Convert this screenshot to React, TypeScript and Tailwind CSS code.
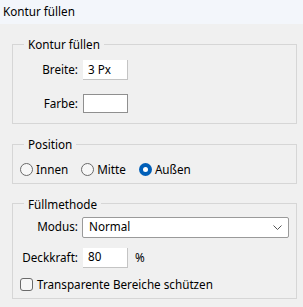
import React from "react";

function Group({ title, children }: { title: string; children: React.ReactNode }) {
  return (
    <fieldset className="ml-[12px] w-[285px] border border-[#d6d6d6] pl-[8px] pr-[7px]">
      <legend className="ml-[3px] px-[4px] leading-[16px]">{title}</legend>
      {children}
    </fieldset>
  );
}

function Radio({ label, checked }: { label: string; checked?: boolean }) {
  return (
    <label className="flex items-center gap-[3px]">
      {checked ? (
        <span className="flex h-[13px] w-[13px] items-center justify-center rounded-full bg-[#005fb8]">
          <span className="h-[5px] w-[5px] rounded-full bg-white" />
        </span>
      ) : (
        <span className="h-[13px] w-[13px] rounded-full border border-[#6a6a6a] bg-[#f7f7f7]" />
      )}
      <span>{label}</span>
    </label>
  );
}

export default function App() {
  return (
    <div
      className="h-[307px] w-[303px] bg-[#f0f0f0] text-[11.7px] text-black"
      style={{ fontFamily: '"Noto Sans", "Open Sans", sans-serif' }}
    >
      {/* Title bar */}
      <div className="flex h-[24px] items-center bg-[#f3f6fb] pl-[3px]">Kontur füllen</div>

      <div className="flex flex-col gap-[12px] pt-[12px]">
        <Group title="Kontur füllen">
          <div className="flex flex-col gap-[14px] pt-[8px] pb-[10px]">
            <div className="flex items-center gap-[5px]">
              <span className="w-[57px] text-right">Breite:</span>
              <div className="flex h-[20px] w-[45px] items-center border-r border-b border-[#c4c4c4] bg-white pl-[5px]">
                3 Px
              </div>
            </div>
            <div className="flex items-center gap-[5px]">
              <span className="w-[57px] text-right">Farbe:</span>
              <div className="h-[19px] w-[45px] border border-[#8f8f8f] bg-white" />
            </div>
          </div>
        </Group>

        <Group title="Position">
          <div className="flex items-center gap-[13px] pt-[9px] pb-[4px] -ml-[1px]">
            <Radio label="Innen" />
            <Radio label="Mitte" />
            <Radio label="Außen" checked />
          </div>
        </Group>

        <Group title="Füllmethode">
          <div className="flex flex-col pt-[5px] pb-[5px]">
            <div className="flex items-center gap-[4px]">
              <span className="w-[57px] text-right">Modus:</span>
              <div className="flex h-[21px] w-[207px] items-center justify-between rounded-[2px] border border-[#9a9a9a] bg-white pl-[6px] pr-[6px]">
                <span>Normal</span>
                <svg width="9" height="5" viewBox="0 0 9 5" fill="none">
                  <path d="M0.5 0.5 L4.5 4.5 L8.5 0.5" stroke="#555" strokeWidth="1" />
                </svg>
              </div>
            </div>
            <div className="mt-[10px] flex items-center gap-[5px]">
              <span className="w-[57px] text-right">Deckkraft:</span>
              <div className="flex h-[20px] w-[45px] items-center border-r border-b border-[#c4c4c4] bg-white pl-[5px]">
                80
              </div>
              <span className="ml-[2px]">%</span>
            </div>
            <label className="mt-[8px] -ml-[1px] flex items-center gap-[4px]">
              <span className="h-[13px] w-[13px] rounded-[3px] border border-[#6a6a6a] bg-[#f7f7f7]" />
              <span>Transparente Bereiche schützen</span>
            </label>
          </div>
        </Group>
      </div>
    </div>
  );
}
